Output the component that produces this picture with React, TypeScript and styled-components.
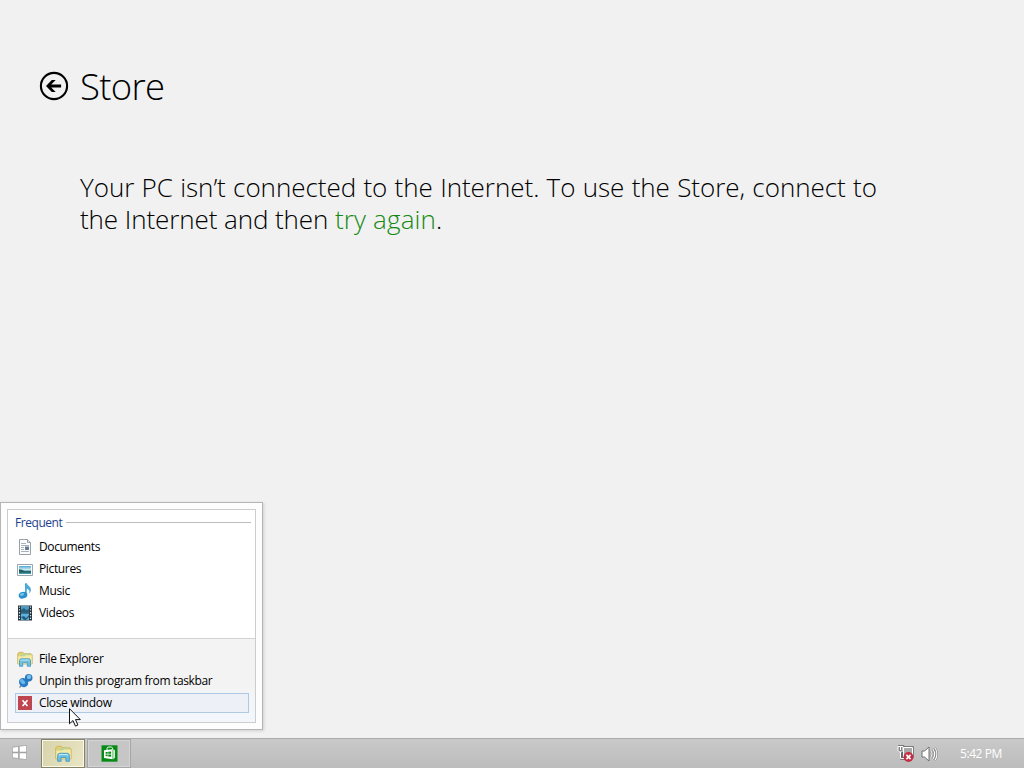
import { FC, ReactNode } from 'react';
import styled, { createGlobalStyle } from 'styled-components';

const App: FC = () => {
  return (
    <Screen>
      <GlobalStyle />

      <StorePage>
        <Header>
          <BackButton aria-label="Back"><BackIcon /></BackButton>
          <Title>Store</Title>
        </Header>
        <Message>
          <Line $spacing={-0.04} $wordSpacing={0.6}>Your PC isn’t connected to the Internet. To use the Store, connect to</Line>
          <Line $spacing={-0.09}>the Internet and then <RetryLink>try again</RetryLink>.</Line>
        </Message>
      </StorePage>

      <JumpList>
        <JumpListPanel>
          <FrequentSection>
            <SectionTitle>Frequent</SectionTitle>
            <MenuItem icon={<DocumentIcon />}>Documents</MenuItem>
            <MenuItem icon={<PictureIcon />}>Pictures</MenuItem>
            <MenuItem icon={<MusicIcon />}>Music</MenuItem>
            <MenuItem icon={<VideoIcon />}>Videos</MenuItem>
          </FrequentSection>
          <TaskSection>
            <MenuItem icon={<FolderIcon size={16} />}>File Explorer</MenuItem>
            <MenuItem icon={<PinIcon />}>Unpin this program from taskbar</MenuItem>
            <MenuItem icon={<CloseIcon />} active>Close window</MenuItem>
          </TaskSection>
        </JumpListPanel>
      </JumpList>

      <Taskbar>
        <StartButton><WindowsIcon /></StartButton>
        <TaskButton $active><FolderIcon size={17} /></TaskButton>
        <TaskButton><StoreIcon /></TaskButton>
        <Tray>
          <NetworkIcon />
          <VolumeIcon />
          <Clock>5:42 PM</Clock>
        </Tray>
      </Taskbar>

      <Cursor viewBox="0 0 12 19">
        <path d="M.5.7v15.1l3.5-3.3 2.4 5.6 2.5-1.1-2.4-5.4h4.8z" fill="#fff" stroke="#111" />
      </Cursor>
    </Screen>
  );
};

interface MenuItemProps {
  icon: ReactNode,
  active?: boolean,
  children: ReactNode,
};

const MenuItem: FC<MenuItemProps> = ({ icon, active, children }) => (
  <Item $active={active}>
    <ItemIcon>{icon}</ItemIcon>
    {children}
  </Item>
);

const BackIcon = () => (
  <svg width="30" height="30" viewBox="0 0 30 30">
    <circle cx="15" cy="15" r="13.1" fill="none" stroke="#000" strokeWidth="2.1" />
    <path d="M7 15l5.8-5.9h3.9l-4.5 4.5h9.9v2.8h-9.9l4.5 4.5h-3.9z" fill="#000" />
  </svg>
);

const DocumentIcon = () => (
  <svg width="16" height="16" viewBox="0 0 16 16">
    <path d="M2.5.5h8l3 3v12h-11z" fill="#fbfcfc" stroke="#98a1a8" />
    <path d="M10.5.5v3h3" fill="#dfe4e8" stroke="#98a1a8" />
    <path d="M4 4.5h5M4 6.5h8M4 8.5h3M4 10.5h3M4 12.5h8" stroke="#aab2b8" />
    <path d="M8 7.5h4v3.5H8z" fill="#647b92" />
  </svg>
);

const PictureIcon = () => (
  <svg width="16" height="16" viewBox="0 0 16 16">
    <defs>
      <linearGradient id="sky" x2="0" y2="1">
        <stop stopColor="#4fa9d8" />
        <stop offset=".5" stopColor="#d8f2f1" />
        <stop offset=".65" stopColor="#246d80" />
        <stop offset="1" stopColor="#48a5b4" />
      </linearGradient>
    </defs>
    <path d="M.5 3.5h15v11H.5z" fill="#fff" stroke="#9aa6ad" />
    <path d="M2 5h12v8H2z" fill="url(#sky)" />
    <path d="M2 8.2l3 .6 3 1.6 6 .2v1H2z" fill="#225f61" />
  </svg>
);

const MusicIcon = () => (
  <svg width="16" height="16" viewBox="0 0 16 16">
    <path d="M8 .3h1.8c.3 2.4 4.6 3.2 4.1 7-.2 1.4-.9 2.6-1.8 3.5.8-2.6.4-4.2-2.3-5.3v6.7H8z" fill="#4ba9d8" />
    <ellipse cx="6" cy="12.2" rx="4.4" ry="3.3" fill="#2b90cc" transform="rotate(-18 6 12.2)" />
    <ellipse cx="5" cy="11.4" rx="2.1" ry="1.3" fill="#74cbed" transform="rotate(-18 5 11.4)" />
  </svg>
);

const VideoIcon = () => (
  <svg width="16" height="16" viewBox="0 0 16 16">
    <path d="M1 .5h14v15H1z" fill="#26343d" />
    <path d="M4 1h8v6.5H4z" fill="#519ac1" />
    <path d="M4 8.5h8V15H4z" fill="#5bb3df" />
    <path d="M4 5l3-2 2 2 3-1v3.5H4zM4 12l3-1 2 2 3-3v2l-3 3H7z" fill="#24607e" />
    <path d="M2.5 1.5v14M13.5 1.5v14" stroke="#dce3e5" strokeWidth="1.2" strokeDasharray="1.3 1.5" />
  </svg>
);

const FolderIcon: FC<{ size: number }> = ({ size }) => (
  <svg width={size} height={size} viewBox="0 0 16 16">
    <path d="M.7 13V2.5L2 1.3h4l1.2 1.4H14l1.2 1.2V13z" fill="#e7cf72" stroke="#c5a84e" strokeWidth=".7" />
    <path d="M3 3.5l9.5-.9.7 1.2V6H3z" fill="#b9d697" />
    <path d="M1.2 5.2h6l1.2-1h6.4v8.5H1.2z" fill="#f6e9a4" />
    <path d="M2.5 15.3V10c0-1.4.8-2.2 2-2.2h7c1.3 0 2 .8 2 2.2v5.3h-3.2v-3.6H5.7v3.6z" fill="#70c2e5" stroke="#3c95c0" strokeWidth=".8" />
    <path d="M3.8 9.8c.2-.7.7-.8 1.5-.8h5.4c.8 0 1.3.2 1.5.8" fill="none" stroke="#c2eaf8" />
  </svg>
);

const PinIcon = () => (
  <svg width="16" height="16" viewBox="0 0 16 16">
    <path d="M5 11.5l-2.5 3" stroke="#6f8798" strokeWidth="1.2" />
    <path d="M6 8l4-4 3 3-4 4z" fill="#1d67ae" />
    <ellipse cx="6.6" cy="9.6" rx="4.3" ry="4.9" fill="#2a7cc6" transform="rotate(-44 6.6 9.6)" />
    <ellipse cx="5.6" cy="8.7" rx="1.8" ry="3" fill="#6bb9e8" transform="rotate(-44 5.6 8.7)" />
    <circle cx="11.7" cy="4.7" r="3.8" fill="#2b78bd" />
    <circle cx="12" cy="3.9" r="2.2" fill="#74c0ea" />
  </svg>
);

const CloseIcon = () => (
  <svg width="14" height="14" viewBox="0 0 14 14">
    <path d="M0 0h14v14H0z" fill="#bd4650" />
    <path d="M4.5 4.2l5 5.8M9.5 4.2l-5 5.8" stroke="#fff" strokeWidth="1.6" />
  </svg>
);

const WindowsIcon = () => (
  <svg width="15" height="15" viewBox="0 0 15 15">
    <path d="M.4 2.3l6.1-.9v5.7H.4zM7.3 1.3l7.3-1v6.8H7.3zM.4 7.9h6.1v5.7l-6.1-.9zM7.3 7.9h7.3v6.8l-7.3-1z" fill="#fff" stroke="#8d8d8d" strokeWidth=".6" />
  </svg>
);

// Green shopping bag, seen at a slight angle, with the four-pane mark on its front
const StoreIcon = () => (
  <svg width="17" height="17" viewBox="0 0 17 17">
    <path d="M.5.3h16v16.4H.5z" fill="#078b16" />
    <path d="M3 5.2l8.6-.9v9.9L3 13z" fill="#fff" />
    <path d="M12.2 4.3l1.8.9v7.6l-1.8 1.4z" fill="#d7efd8" />
    <path d="M6 5V4c0-1.3.6-2 2-2h1.7c1.3 0 1.9.6 1.9 1.8v.8" fill="none" stroke="#fff" />
    <path d="M4.6 7.1l2.1-.2v1.9H4.6zM7.2 6.8l3-.3v2.3h-3zM4.6 9.4h2.1v1.9l-2.1-.2zM7.2 9.4h3v2.3l-3-.3z" fill="#078b16" />
  </svg>
);

const NetworkIcon = () => (
  <svg width="17" height="17" viewBox="0 0 17 17">
    <path d="M6.5 2.5h9v9h-9z" fill="#aaa" stroke="#626262" strokeWidth="2.4" />
    <path d="M1 1.5h5v4L4.5 7v6.5h4" fill="#aaa" stroke="#626262" strokeWidth="2.6" />
    <path d="M6.5 2.5h9v9h-9z" fill="#a8a8a8" stroke="#fff" />
    <path d="M1 1.5h5v4L4.5 7h-2L1 5.5z" fill="#858585" stroke="#fff" />
    <path d="M3.5 7v6.5H7M3.5 2v3" fill="none" stroke="#fff" />
    <circle cx="11.5" cy="12" r="4.9" fill="#c62d43" />
    <path d="M9.4 9.9l4.2 4.2m0-4.2l-4.2 4.2" stroke="#fff" strokeWidth="1.6" />
  </svg>
);

const VolumeIcon = () => (
  <svg width="17" height="16" viewBox="0 0 17 16">
    <path d="M1 5h2.5L8 1v14l-4.5-4H1z" fill="#fff" stroke="#707070" />
    <path d="M10 5c1.3 1.8 1.3 4.2 0 6M12 3.2c2 2.8 2 6.8 0 9.6M13.8 1.5c2.8 3.8 2.8 9.2 0 13" fill="none" stroke="#757575" strokeWidth="2" />
    <path d="M10 5c1.3 1.8 1.3 4.2 0 6M12 3.2c2 2.8 2 6.8 0 9.6M13.8 1.5c2.8 3.8 2.8 9.2 0 13" fill="none" stroke="#fff" strokeWidth="1.1" />
  </svg>
);


const GlobalStyle = createGlobalStyle`
  * { box-sizing: border-box; }
  body { margin: 0; overflow: hidden; }
  svg { display: block; flex-shrink: 0; }
`;
const Screen = styled.div`
  position: relative;
  display: flex;
  flex-direction: column;
  width: 1024px;
  height: 768px;
  background: #f1f1f1;
  font-family: "Open Sans", "Noto Sans", sans-serif;
  cursor: default;
`;
const StorePage = styled.main`
  flex: 1;
  padding: 60px 39px 0;
`;
const Header = styled.header`
  display: flex;
  align-items: center;
  gap: 11px;
  height: 52px;
`;
const BackButton = styled.button`
  padding: 0;
  border: 0;
  background: none;
`;
const Title = styled.h1`
  margin: 0;
  font-size: 36.5px;
  font-weight: 300;
  line-height: 52px;
  letter-spacing: -0.7px;
`;
const Message = styled.p`
  margin: 59px 0 0 41px;
  font-size: 26px;
  font-weight: 300;
  line-height: 32px;
`;
const Line = styled.span<{ $spacing: number, $wordSpacing?: number }>`
  display: block;
  white-space: nowrap;
  letter-spacing: ${({ $spacing }) => $spacing}px;
  word-spacing: ${({ $wordSpacing }) => $wordSpacing || 0}px;
`;
const RetryLink = styled.a`
  color: #148a14;
  letter-spacing: 0.15px;
`;
const JumpList = styled.div`
  position: absolute;
  left: 0;
  bottom: 38px;
  width: 263px;
  height: 228px;
  padding: 6px;
  border: 1px solid #b5b5b5;
  background: #fdfdfd;
  box-shadow: 1px 1px 3px rgba(0, 0, 0, 0.14);
`;
const JumpListPanel = styled.div`
  display: flex;
  flex-direction: column;
  width: 249px;
  height: 214px;
  border: 1px solid #ccc;
  background: #fff;
`;
const FrequentSection = styled.section`
  height: 128px;
  padding: 0 4px 0 7px;
`;
const SectionTitle = styled.div`
  display: flex;
  align-items: center;
  gap: 4px;
  height: 26px;
  padding-bottom: 2px;
  color: #1e3f8d;
  font-size: 12px;
  letter-spacing: -0.45px;

  &::after {
    content: '';
    flex: 1;
    height: 1px;
    margin-top: 1px;
    background: #bcbcbc;
  }
`;
const TaskSection = styled.section`
  flex: 1;
  padding: 9px 6px 0 7px;
  border-top: 1px solid #d2d2d2;
  background: linear-gradient(#f3f3f3 55%, #f3f7fc);
`;
const Item = styled.div<{ $active?: boolean }>`
  display: flex;
  align-items: center;
  gap: 6px;
  height: ${({ $active }) => $active ? 20 : 22}px;
  margin-top: ${({ $active }) => $active ? 1 : 0}px;
  padding-left: 1px;
  border: 1px solid ${({ $active }) => $active ? '#aec9e3' : 'transparent'};
  background: ${({ $active }) => $active ? '#edf0f7' : 'none'};
  font-size: 12px;
  letter-spacing: -0.36px;
  line-height: 16px;
  white-space: nowrap;
`;
const ItemIcon = styled.span`
  display: flex;
  align-items: center;
  justify-content: center;
  width: 16px;
`;
const Taskbar = styled.footer`
  display: flex;
  height: 30px;
  border-top: 1px solid #aaa;
  background: linear-gradient(#c9c9c9, #bcbcbc);
`;
const StartButton = styled.div`
  display: flex;
  align-items: center;
  justify-content: center;
  width: 41px;
  padding: 0 2px 2px 0;
`;
const TaskButton = styled.div<{ $active?: boolean }>`
  display: flex;
  align-items: center;
  justify-content: center;
  width: 44px;
  margin-right: 2px;
  border: 1px solid ${({ $active }) => $active ? '#858466' : '#a5a5a5'};
  background: ${({ $active }) => $active ? 'linear-gradient(120deg, #d7d3ab, #eae6c4)' : '#c6c6c6'};
  box-shadow: inset 0 0 0 1px ${({ $active }) => $active ? '#faf8ea' : '#d4d4d4'};
`;
const Tray = styled.div`
  display: flex;
  align-items: center;
  gap: 7px;
  margin-left: auto;
  padding-right: 22px;
`;
const Clock = styled.span`
  margin-left: 15px;
  color: #fff;
  font-size: 12px;
  letter-spacing: -0.4px;
`;
const Cursor = styled.svg`
  position: absolute;
  top: 708px;
  left: 69px;
  width: 12px;
  height: 19px;
`;

export default App;
